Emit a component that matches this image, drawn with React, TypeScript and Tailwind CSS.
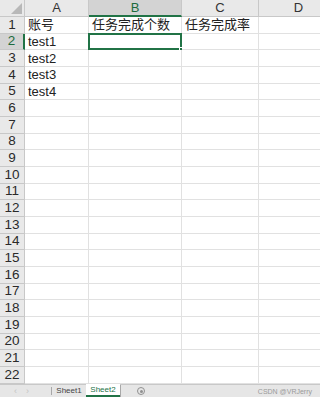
import { Fragment } from 'react'

const cols = ['A', 'B', 'C', 'D']
const rows = Array.from({ length: 22 }, (_, i) => i + 1)

const cells: Record<string, string> = {
  A1: '账号',
  B1: '任务完成个数',
  C1: '任务完成率',
  A2: 'test1',
  A3: 'test2',
  A4: 'test3',
  A5: 'test4',
}

export default function App() {
  return (
    <div
      className="w-[320px] h-[397px] flex flex-col bg-white overflow-hidden text-[#222]"
      style={{ fontFamily: '"Liberation Sans", "Noto Sans CJK SC", sans-serif' }}
    >
      {/* sheet grid */}
      <div className="flex-1 overflow-hidden">
        <div className="grid grid-cols-[25px_64px_93px_77px_80px] grid-rows-[17px_repeat(22,16.68px)]">
          {/* corner */}
          <div className="relative bg-[#e9e9e9] border-r border-b border-[#c8c8c8]">
            <div className="absolute right-[2px] bottom-[2px] w-0 h-0 border-l-[11px] border-l-transparent border-b-[11px] border-b-[#b8b8b8]" />
          </div>
          {cols.map((c) => (
            <div
              key={c}
              className={
                c === 'B'
                  ? 'flex items-center justify-center text-[13px] bg-[#d3d3d3] text-[#1e6b3e] border-r border-[#c8c8c8] border-b-2 border-b-[#217346]'
                  : 'flex items-center justify-center text-[13px] bg-[#e9e9e9] text-[#333] border-r border-b border-[#c8c8c8]'
              }
            >
              {c}
            </div>
          ))}

          {rows.map((r) => (
            <Fragment key={r}>
              <div
                className={
                  r === 2
                    ? 'flex items-center justify-center text-[13.5px] bg-[#d3d3d3] text-[#1e6b3e] border-b border-[#c8c8c8] border-r-2 border-r-[#217346]'
                    : 'flex items-center justify-center text-[13.5px] bg-[#e9e9e9] text-[#2a2a2a] border-r border-b border-[#c8c8c8]'
                }
              >
                {r}
              </div>
              {cols.map((c) => {
                const key = `${c}${r}`
                const selected = key === 'B2'
                return (
                  <div
                    key={key}
                    className="relative flex items-center pl-[3px] text-[13px] whitespace-nowrap overflow-visible border-r border-b border-[#e1e1e1]"
                  >
                    <span className="leading-none">{cells[key]}</span>
                    {selected && (
                      <div className="absolute -left-[1px] -top-[1px] -right-[1px] -bottom-[1px] border-2 border-[#217346]">
                        <div className="absolute -right-[3px] -bottom-[3px] w-[4px] h-[4px] bg-[#217346] border border-white" />
                      </div>
                    )}
                  </div>
                )
              })}
            </Fragment>
          ))}
        </div>
      </div>

      {/* sheet tabs */}
      <div className="h-[13px] shrink-0 flex items-stretch bg-[#e6e6e6] border-t border-[#c8c8c8] text-[8px] leading-none">
        <div className="w-[51px] flex items-center gap-[9px] pl-[14px] text-[#c4c4c4] text-[9px]">
          <span>‹</span>
          <span>›</span>
        </div>
        <div className="w-px bg-[#a8a8a8] my-[2px]" />
        <div className="w-[34px] flex items-center justify-center text-[#444]">Sheet1</div>
        <div className="w-[34px] flex items-center justify-center bg-white text-[#217346] border-b-2 border-[#217346] -mt-px">
          Sheet2
        </div>
        <div className="w-px bg-[#a8a8a8]" />
        <div className="w-[40px] flex items-center justify-center">
          <span className="w-[8px] h-[8px] rounded-full border border-[#909090] flex items-center justify-center">
            <span className="w-[3px] h-[3px] rounded-full bg-[#909090]" />
          </span>
        </div>
        <div className="flex-1 flex items-center justify-end pr-[8px] text-[7px] text-[#9a9a9a]">CSDN @VRJerry</div>
      </div>
    </div>
  )
}
